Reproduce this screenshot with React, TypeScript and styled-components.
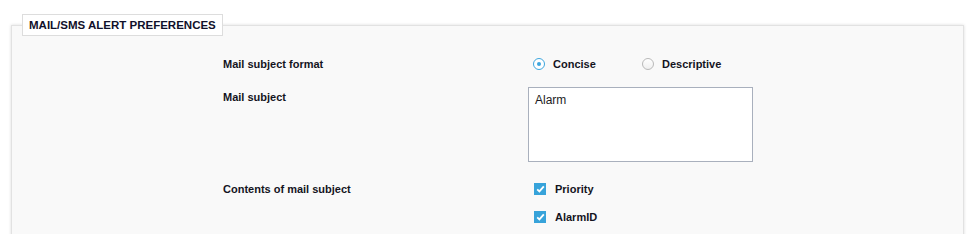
import React, { useState } from 'react';
import styled, { createGlobalStyle } from 'styled-components';

const GlobalStyle = createGlobalStyle`
  html, body {
    margin: 0;
    padding: 0;
    background: #ffffff;
  }
  body {
    font-family: 'Liberation Sans', Arial, sans-serif;
    color: #1c1c24;
  }
`;

const Page = styled.div`
  height: 234px;
  box-sizing: border-box;
  overflow: hidden;
  padding: 14px 14px 0 11px;
`;

const Fieldset = styled.fieldset`
  margin: 0;
  padding: 18px 0 40px 0;
  border: 1px solid #e2e2e2;
  background: #f9f9f9;
  box-shadow: 0 0 3px rgba(0, 0, 0, 0.14);
  min-width: 0;
`;

const Legend = styled.legend`
  margin-left: 10px;
  padding: 0 6px;
  height: 22px;
  line-height: 21px;
  box-sizing: border-box;
  background: #ffffff;
  border: 1px solid #dddddd;
  font-size: 11.5px;
  font-weight: bold;
  color: #10102a;
`;

const Form = styled.div`
  display: flex;
  flex-direction: column;
  padding-left: 211px;
`;

const Row = styled.div<{ $gap: number }>`
  display: grid;
  grid-template-columns: 305px 1fr;
  align-items: start;
  margin-top: ${p => p.$gap}px;
`;

const Label = styled.div`
  font-size: 11px;
  font-weight: bold;
  line-height: 20px;
  color: #14141e;
`;

const Options = styled.div`
  display: flex;
  align-items: center;
  height: 20px;
  padding-left: 5px;
`;

const RadioOption = styled.label`
  display: flex;
  align-items: center;
  width: 109px;
  cursor: pointer;
  font-size: 11px;
  font-weight: bold;
  color: #14141e;
`;

const RadioInput = styled.input`
  appearance: none;
  margin: 0 8px 0 0;
  width: 12px;
  height: 12px;
  border-radius: 50%;
  border: 1px solid #b9b9b9;
  background: linear-gradient(#ffffff, #f0f0f0);
  box-sizing: border-box;
  display: grid;
  place-items: center;
  &:checked {
    border-color: #3ea6de;
    background: #ffffff;
  }
  &:checked::after {
    content: '';
    width: 4px;
    height: 4px;
    border-radius: 50%;
    background: #3ea6de;
  }
`;

const TextArea = styled.textarea`
  width: 225px;
  height: 75px;
  box-sizing: border-box;
  margin: 0;
  padding: 5px 6px;
  border: 1px solid #a9b0bd;
  background: #ffffff;
  font-family: 'Liberation Sans', Arial, sans-serif;
  font-size: 12px;
  line-height: 14px;
  color: #1c1c24;
  resize: none;
  outline: none;
`;

const CheckList = styled.div`
  display: flex;
  flex-direction: column;
  gap: 8px;
  padding-left: 6px;
`;

const CheckOption = styled.label`
  display: flex;
  align-items: center;
  height: 20px;
  gap: 9px;
  cursor: pointer;
  font-size: 11px;
  font-weight: bold;
  color: #14141e;
  input {
    display: none;
  }
`;

const Box = styled.span<{ $on: boolean }>`
  width: 12px;
  height: 12px;
  display: grid;
  place-items: center;
  background: ${p => (p.$on ? '#37a3da' : '#ffffff')};
  border: ${p => (p.$on ? 'none' : '1px solid #b9b9b9')};
  box-sizing: border-box;
`;

const Check = ({ label, checked, onToggle }: { label: string; checked: boolean; onToggle: () => void }) => (
  <CheckOption>
    <input type="checkbox" checked={checked} onChange={onToggle} />
    <Box $on={checked}>
      {checked && (
        <svg width="9" height="8" viewBox="0 0 9 8">
          <path d="M1.2 4.3 L3.4 6.4 L7.8 1.3" fill="none" stroke="#ffffff" strokeWidth="1.8" />
        </svg>
      )}
    </Box>
    {label}
  </CheckOption>
);

const App = () => {
  const [format, setFormat] = useState('concise');
  const [subject, setSubject] = useState('Alarm');
  const [priority, setPriority] = useState(true);
  const [alarmId, setAlarmId] = useState(true);

  return (
    <Page>
      <GlobalStyle />
      <Fieldset>
        <Legend>MAIL/SMS ALERT PREFERENCES</Legend>
        <Form>
          <Row $gap={0}>
            <Label>Mail subject format</Label>
            <Options>
              <RadioOption>
                <RadioInput
                  type="radio"
                  name="format"
                  checked={format === 'concise'}
                  onChange={() => setFormat('concise')}
                />
                Concise
              </RadioOption>
              <RadioOption>
                <RadioInput
                  type="radio"
                  name="format"
                  checked={format === 'descriptive'}
                  onChange={() => setFormat('descriptive')}
                />
                Descriptive
              </RadioOption>
            </Options>
          </Row>
          <Row $gap={13}>
            <Label>Mail subject</Label>
            <TextArea value={subject} onChange={e => setSubject(e.target.value)} />
          </Row>
          <Row $gap={17}>
            <Label>Contents of mail subject</Label>
            <CheckList>
              <Check label="Priority" checked={priority} onToggle={() => setPriority(!priority)} />
              <Check label="AlarmID" checked={alarmId} onToggle={() => setAlarmId(!alarmId)} />
            </CheckList>
          </Row>
        </Form>
      </Fieldset>
    </Page>
  );
};

export default App;
